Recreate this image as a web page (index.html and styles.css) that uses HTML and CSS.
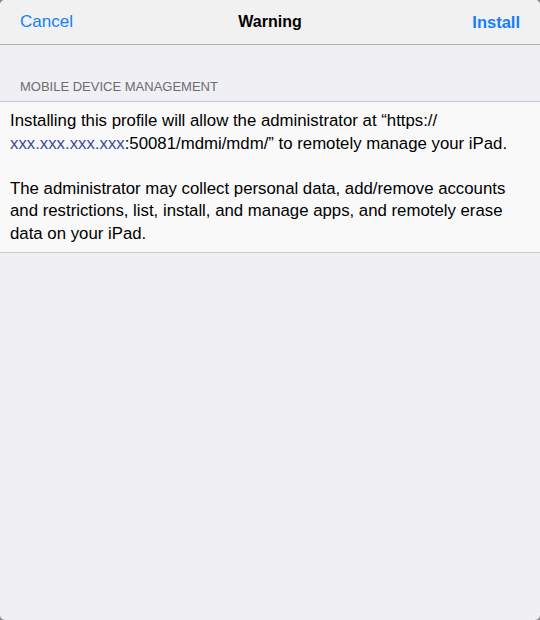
FILE: index.html
```html
<!DOCTYPE html>
<html lang="en">
<head>
  <meta charset="UTF-8">
  <meta name="viewport" content="width=device-width, initial-scale=1.0">
  <title>Warning</title>
  <link rel="stylesheet" href="styles.css">
</head>
<body>
  <div class="sheet">
    <div class="nav-bar">
      <span class="nav-btn">Cancel</span>
      <span class="nav-title">Warning</span>
      <span class="nav-btn nav-btn-strong">Install</span>
    </div>

    <div class="section-header">MOBILE DEVICE MANAGEMENT</div>
    <div class="section-body">
      <p>Installing this profile will allow the administrator at “https://<br><span class="masked">xxx.xxx.xxx.xxx</span>:50081/mdmi/mdm/” to remotely manage your iPad.</p>
      <p>The administrator may collect personal data, add/remove accounts and restrictions, list, install, and manage apps, and remotely erase data on your iPad.</p>
    </div>
  </div>
</body>
</html>
```

FILE: styles.css
```css
html, body {
  margin: 0;
  padding: 0;
  background-color: #8a8a8e;
}

body {
  font-family: "Liberation Sans", Arial, sans-serif;
}

.sheet {
  width: 540px;
  height: 620px;
  background-color: #efeff4;
  border-radius: 5px;
  overflow: hidden;
}

.nav-bar {
  height: 44px;
  display: flex;
  align-items: center;
  justify-content: space-between;
  padding: 0 20px;
  background-color: #f1f1f2;
  border-bottom: 1px solid #b2b2b2;
}

.nav-btn {
  width: 80px;
  font-size: 17px;
  color: #157efb;
}

.nav-btn-strong {
  text-align: right;
  font-weight: bold;
  font-size: 16.5px;
}

.nav-title {
  font-size: 16px;
  font-weight: bold;
  color: #000;
}

.section-header {
  padding: 34px 20px 7px;
  font-size: 13px;
  color: #6d6d72;
}

.section-body {
  background-color: #f9f9f9;
  border-top: 1px solid #c8c7cc;
  border-bottom: 1px solid #c8c7cc;
  padding: 8px 10px 7px;
}

.section-body p {
  margin: 0;
  font-size: 16.8px;
  line-height: 22.5px;
  color: #000;
}

.section-body p + p {
  margin-top: 22.5px;
}

.masked {
  color: #3a4a9c;
}
```
